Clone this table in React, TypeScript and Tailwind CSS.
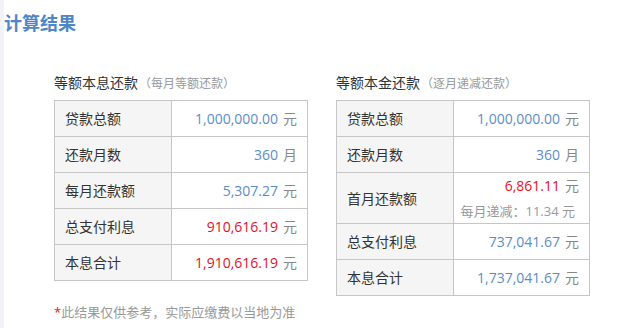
const font = { fontFamily: '"Open Sans", "Noto Sans CJK SC", sans-serif' };

type Row = {
  label: string;
  value: string;
  unit: string;
  color: "blue" | "red";
  note?: string;
};

const equalPayment: Row[] = [
  { label: "贷款总额", value: "1,000,000.00", unit: "元", color: "blue" },
  { label: "还款月数", value: "360", unit: "月", color: "blue" },
  { label: "每月还款额", value: "5,307.27", unit: "元", color: "blue" },
  { label: "总支付利息", value: "910,616.19", unit: "元", color: "red" },
  { label: "本息合计", value: "1,910,616.19", unit: "元", color: "red" },
];

const equalPrincipal: Row[] = [
  { label: "贷款总额", value: "1,000,000.00", unit: "元", color: "blue" },
  { label: "还款月数", value: "360", unit: "月", color: "blue" },
  { label: "首月还款额", value: "6,861.11", unit: "元", color: "red", note: "每月递减：11.34 元" },
  { label: "总支付利息", value: "737,041.67", unit: "元", color: "blue" },
  { label: "本息合计", value: "1,737,041.67", unit: "元", color: "blue" },
];

function ResultTable({ title, sub, rows }: { title: string; sub: string; rows: Row[] }) {
  return (
    <div className="w-[254px]">
      <div className="h-[20px] flex items-end text-[14px] text-[#333] leading-none">
        {title}
        <span className="text-[12px] text-[#999] ml-[1px]">（{sub}）</span>
      </div>
      <table className="mt-[10px] w-[254px] border-collapse border border-[#c6c6c6] text-[14px]">
        <tbody>
          {rows.map((r) => (
            <tr key={r.label} className={r.note ? "h-[51px]" : "h-[36px]"}>
              <td className="w-[117px] border border-[#c6c6c6] bg-[#f5f5f5] pl-[10px] text-[#333]">
                {r.label}
              </td>
              <td className="border border-[#c6c6c6] pr-[10px] text-right">
                <div className="leading-[18px]">
                  <span className={r.color === "red" ? "text-[#e8101e]" : "text-[#5b8ccb]"}>
                    {r.value}
                  </span>
                  <span className="text-[#888] ml-[5px]">{r.unit}</span>
                </div>
                {r.note && (
                  <div className="text-[13px] text-[#999] leading-[18px] mt-[7px] pr-[4px]">
                    {r.note}
                  </div>
                )}
              </td>
            </tr>
          ))}
        </tbody>
      </table>
    </div>
  );
}

export default function App() {
  return (
    <div className="w-[640px] h-[328px] bg-white flex" style={font}>
      <div className="w-[4px] bg-[#f1f3f7]" />
      <div className="flex-1">
        <h2 className="mt-[12px] h-[22px] text-[18px] font-bold text-[#4f87c6] leading-[22px]">
          计算结果
        </h2>
        <div className="mt-[36px] ml-[50px] flex gap-[28px] items-start">
          <ResultTable title="等额本息还款" sub="每月等额还款" rows={equalPayment} />
          <ResultTable title="等额本金还款" sub="逐月递减还款" rows={equalPrincipal} />
        </div>
        <p className="ml-[50px] mt-[7px] text-[13px] leading-[18px] text-[#999]">
          <span className="text-[#e8101e]">*</span>此结果仅供参考，实际应缴费以当地为准
        </p>
      </div>
    </div>
  );
}
